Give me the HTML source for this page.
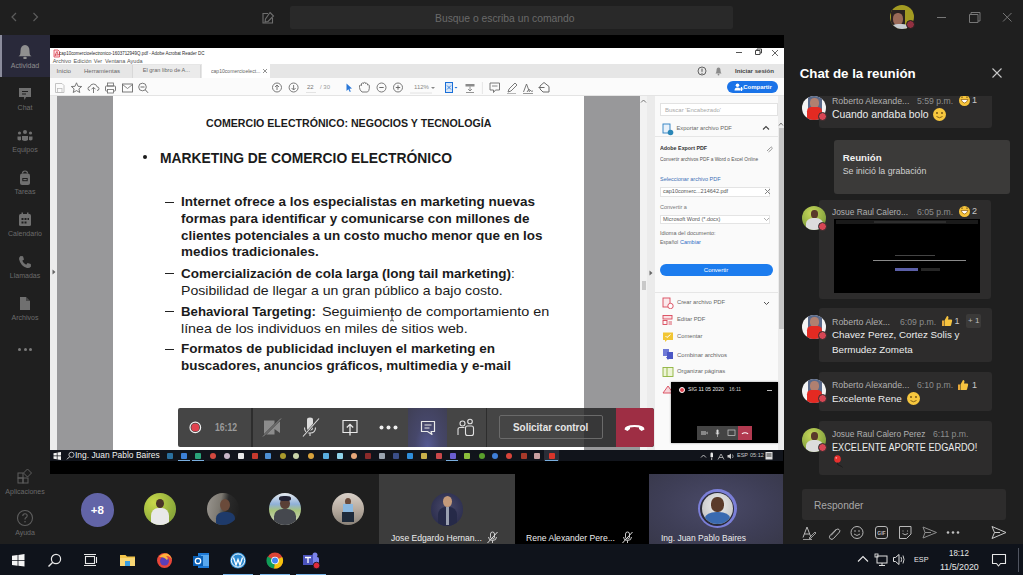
<!DOCTYPE html>
<html><head><meta charset="utf-8">
<style>
*{margin:0;padding:0;box-sizing:border-box}
html,body{width:1023px;height:575px;overflow:hidden;background:#1f1f1f;font-family:"Liberation Sans",sans-serif}
.a{position:absolute}
.t{position:absolute;white-space:nowrap;line-height:1}
#top{left:0;top:0;width:1023px;height:35px;background:#1f1f1f}
#rail{left:0;top:35px;width:50px;height:509px;background:#1f1f1f}
#stage{left:50px;top:35px;width:734px;height:439px;background:#000}
#chat{left:784px;top:35px;width:239px;height:509px;background:#1f1f1f}
#strip{left:50px;top:474px;width:734px;height:70px;background:#1f1f1f}
#tb{left:0;top:544px;width:1023px;height:31px;background:#0f131b}
.rl{position:absolute;left:0;width:50px;text-align:center;font-size:7px;color:#6c6c6c;line-height:1}
</style></head><body>
<div id="top" class="a">
  <svg class="a" style="left:0;top:0" width="60" height="35"><path d="M16 13 L12 17 L16 21" stroke="#5c5c5c" stroke-width="1.2" fill="none"/><path d="M33.5 13 L37.5 17 L33.5 21" stroke="#5c5c5c" stroke-width="1.2" fill="none"/></svg>
  <svg class="a" style="left:261px;top:11px" width="14" height="14"><path d="M9 1.5 L12.5 5 L7 10.5 L4 11 L4.5 8 Z" stroke="#6e6e6e" stroke-width="1.1" fill="none"/><path d="M7 2.5 H2 V12 H11.5 V7" stroke="#6e6e6e" stroke-width="1.1" fill="none"/></svg>
  <div class="a" style="left:290px;top:6px;width:443px;height:23px;background:#292929;border-radius:2px"></div>
  <div class="t" style="left:434.7px;top:12.6px;font-size:10.5px;color:#6a6a6a;transform:scaleX(0.984);transform-origin:0 0">Busque o escriba un comando</div>
  <div class="a" style="left:890px;top:5px;width:24px;height:24px;border-radius:50%;background:#a39b22;overflow:hidden"><div class="a" style="left:1px;top:5px;width:14px;height:19px;background:#2a2220"></div><div class="a" style="left:3px;top:8px;width:10px;height:12px;border-radius:45%;background:#9a6a58"></div><div class="a" style="left:1px;top:19px;width:18px;height:8px;border-radius:40% 40% 0 0;background:#c8ccd0"></div></div>
  <div class="a" style="left:906px;top:19.5px;width:9px;height:9px;border-radius:50%;background:#923040;border:1px solid #1f1f1f"></div>
  <div class="a" style="left:936.5px;top:16.5px;width:9.5px;height:1px;background:#777"></div>
  <svg class="a" style="left:968px;top:11px" width="14" height="13"><path d="M1.5 3.5 H10 V11.5 H1.5 Z" stroke="#777" fill="none"/><path d="M3 3.5 V1.5 H12 V10 H10" stroke="#777" fill="none"/></svg>
  <svg class="a" style="left:1002px;top:12px" width="11" height="11"><path d="M1 1 L9.5 9.5 M9.5 1 L1 9.5" stroke="#777" stroke-width="1"/></svg>
</div>
<div id="rail" class="a">
  <div class="a" style="left:0;top:0;width:50px;height:42px;background:#29293a"></div>
  <div class="a" style="left:0;top:0;width:2px;height:42px;background:#8b8c9c"></div>
  <svg class="a" style="left:17px;top:8px" width="16" height="16"><path d="M3 12 Q3.5 10.5 3.5 8 Q3.5 2.5 8 2 Q12.5 2.5 12.5 8 Q12.5 10.5 13 12 L14.5 13.2 H1.5 Z" fill="#8f8f8f"/><ellipse cx="8" cy="15" rx="1.8" ry="1.2" fill="#8f8f8f"/></svg>
  <div class="rl" style="top:27px;color:#8f8f8f">Actividad</div>
  <svg class="a" style="left:17px;top:51px" width="16" height="16"><path d="M2 2 H14 V11 H9 L7.5 14 L7 11 H2 Z" fill="#707070"/><path d="M5 5.5 H11 M5 8 H9" stroke="#1f1f1f" stroke-width="1"/></svg>
  <div class="rl" style="top:69px">Chat</div>
  <svg class="a" style="left:16px;top:94px" width="18" height="14"><circle cx="9" cy="3" r="2" fill="#707070"/><circle cx="3.5" cy="4" r="1.6" fill="#707070"/><circle cx="14.5" cy="4" r="1.6" fill="#707070"/><path d="M6 7 H12 V11 Q9 13 6 11 Z" fill="#707070"/><path d="M1.5 7.5 H5 V11 Q3 12 1.5 10.5 Z" fill="#707070"/><path d="M13 7.5 H16.5 V10.5 Q15 12 13 11 Z" fill="#707070"/></svg>
  <div class="rl" style="top:111px">Equipos</div>
  <svg class="a" style="left:18px;top:135px" width="14" height="16"><path d="M4.5 3.5 Q4.5 1 7 1 Q9.5 1 9.5 3.5" stroke="#707070" stroke-width="1.2" fill="none"/><rect x="2" y="3.5" width="10" height="11.5" rx="2" fill="#707070"/><rect x="4.3" y="8" width="5.4" height="3.2" fill="#1f1f1f"/><rect x="5.3" y="9" width="3.4" height="1.2" fill="#707070"/></svg>
  <div class="rl" style="top:153px">Tareas</div>
  <svg class="a" style="left:18px;top:177px" width="14" height="15"><rect x="1" y="2" width="12" height="12" rx="1.5" fill="#707070"/><rect x="3.5" y="0.5" width="1.5" height="3" fill="#707070"/><rect x="9" y="0.5" width="1.5" height="3" fill="#707070"/><rect x="3.5" y="6" width="2" height="2" fill="#1f1f1f"/><rect x="6.5" y="6" width="2" height="2" fill="#1f1f1f"/><rect x="9.5" y="6" width="1.5" height="2" fill="#1f1f1f"/><rect x="3.5" y="9.5" width="2" height="2" fill="#1f1f1f"/><rect x="6.5" y="9.5" width="2" height="2" fill="#1f1f1f"/></svg>
  <div class="rl" style="top:195px">Calendario</div>
  <svg class="a" style="left:18px;top:220px" width="14" height="14"><path d="M2.5 1 L5 1.2 L6 4.5 L4.3 5.8 Q5.5 8.7 8.2 9.8 L9.5 8 L12.8 9 L13 11.5 Q11.5 13.5 9 13 Q2.5 11 1 4 Q1 2 2.5 1 Z" fill="#707070"/></svg>
  <div class="rl" style="top:237px">Llamadas</div>
  <svg class="a" style="left:19px;top:261px" width="12" height="15"><path d="M1 1 H7 L11 5 V14 H1 Z" fill="#707070"/><path d="M7 1 V5 H11" fill="#1f1f1f" opacity="0.5"/></svg>
  <div class="rl" style="top:279px">Archivos</div>
  <div class="a" style="left:18px;top:313px;width:3px;height:3px;border-radius:50%;background:#7a7a7a"></div>
  <div class="a" style="left:23.5px;top:313px;width:3px;height:3px;border-radius:50%;background:#7a7a7a"></div>
  <div class="a" style="left:29px;top:313px;width:3px;height:3px;border-radius:50%;background:#7a7a7a"></div>
  <svg class="a" style="left:17px;top:433px" width="16" height="16"><rect x="1" y="5" width="5" height="5" stroke="#5e5e5e" fill="none"/><rect x="1" y="10" width="5" height="5" stroke="#5e5e5e" fill="none"/><rect x="6" y="10" width="5" height="5" stroke="#5e5e5e" fill="none"/><path d="M10.5 1 L14.5 5 L10.5 9 L6.5 5 Z" stroke="#5e5e5e" fill="none"/></svg>
  <div class="rl" style="top:453px;color:#6a6a6a">Aplicaciones</div>
  <svg class="a" style="left:16px;top:474px" width="18" height="18"><circle cx="9" cy="9" r="7.5" stroke="#5e5e5e" stroke-width="1.1" fill="none"/><path d="M6.8 7 Q6.8 4.8 9 4.8 Q11.2 4.8 11.2 6.8 Q11.2 8 9.5 9 Q9 9.4 9 10.6" stroke="#5e5e5e" stroke-width="1.1" fill="none"/><circle cx="9" cy="12.8" r="0.8" fill="#5e5e5e"/></svg>
  <div class="rl" style="top:494px;color:#6a6a6a">Ayuda</div>
</div>
<div id="stage" class="a"></div>
<!-- ACROBAT -->
<div class="a" style="left:50px;top:48px;width:734px;height:402px;background:#fff;overflow:hidden">
  <svg class="a" style="left:3px;top:1px" width="7" height="9"><path d="M1 1 H5 L6.5 2.5 V8 H1 Z" fill="#fde8ea" stroke="#e04050" stroke-width="0.8"/><path d="M2 6.5 Q3.5 3 4 2.5 Q4.5 5 5.5 6 Q3.5 5.5 2 6.5 Z" fill="none" stroke="#d02030" stroke-width="0.7"/></svg>
  <div class="t" style="left:9px;top:2.5px;font-size:5.5px;color:#2a2a2a;transform:scaleX(0.81);transform-origin:0 0">cap10comercioelectronico-1603712949Q.pdf - Adobe Acrobat Reader DC</div>
  <div class="t" style="left:2.7px;top:10.5px;font-size:5.5px;color:#555">Archivo</div><div class="t" style="left:23.5px;top:10.5px;font-size:5.5px;color:#555">Edición</div><div class="t" style="left:43.8px;top:10.5px;font-size:5.5px;color:#555">Ver</div><div class="t" style="left:55px;top:10.5px;font-size:5.5px;color:#555">Ventana</div><div class="t" style="left:77px;top:10.5px;font-size:5.5px;color:#555">Ayuda</div>
  <div class="a" style="left:686px;top:4px;width:6px;height:1px;background:#555"></div>
  <svg class="a" style="left:703px;top:0px" width="10" height="8"><path d="M2.5 2.5 H7 V6.5 H2.5 Z M4 2.5 V1 H8.5 V5 H7" stroke="#444" fill="none" stroke-width="1"/></svg>
  <svg class="a" style="left:721px;top:1px" width="8" height="8"><path d="M1 1 L7 7 M7 1 L1 7" stroke="#555" stroke-width="0.9"/></svg>
  <!-- tab row -->
  <div class="a" style="left:0;top:16px;width:734px;height:14px;background:#e6e6e6"></div>
  <div class="t" style="left:6.6px;top:20px;font-size:6.2px;color:#666">Inicio</div>
  <div class="t" style="left:34px;top:20px;font-size:6px;color:#666">Herramientas</div>
  <div class="a" style="left:82px;top:17px;width:69px;height:13px;background:#ebebeb;border-left:1px solid #d8d8d8;border-right:1px solid #d8d8d8"></div>
  <div class="t" style="left:92.7px;top:20.3px;font-size:5.6px;color:#666">El gran libro de A...</div>
  <div class="a" style="left:152px;top:16px;width:68px;height:14px;background:#fff"></div>
  <div class="t" style="left:160.6px;top:20.3px;font-size:6px;color:#666;transform:scaleX(0.846);transform-origin:0 0">cap10comercioelect...</div>
  <svg class="a" style="left:212px;top:20px" width="6" height="6"><path d="M1 1 L5 5 M5 1 L1 5" stroke="#777" stroke-width="0.8"/></svg>
  <svg class="a" style="left:647px;top:18px" width="10" height="10"><circle cx="5" cy="5" r="4" stroke="#555" fill="none" stroke-width="0.9"/><path d="M5 2.6 V5.8" stroke="#555"/><circle cx="5" cy="7.3" r="0.6" fill="#555"/></svg>
  <svg class="a" style="left:664px;top:18px" width="9" height="10"><path d="M1.5 7.5 Q2.5 6.5 2.5 4.5 Q2.5 1.5 4.5 1.5 Q6.5 1.5 6.5 4.5 Q6.5 6.5 7.5 7.5 Z" fill="#8a8a8a"/><circle cx="4.5" cy="8.6" r="0.9" fill="#8a8a8a"/></svg>
  <div class="t" style="left:685px;top:20px;font-size:6.1px;color:#444;font-weight:bold">Iniciar sesión</div>
  <!-- toolbar -->
  <div class="a" style="left:0;top:30px;width:734px;height:18px;background:#fbfbfb;border-bottom:1px solid #e4e4e4"></div>
  <div class="a" style="left:677px;top:33px;width:51px;height:12px;border-radius:6px;background:#1a73e8"></div>
  <svg class="a" style="left:684px;top:35px" width="10" height="8"><circle cx="3.5" cy="2.2" r="1.8" fill="#fff"/><path d="M0.5 7.5 Q0.5 4.5 3.5 4.5 Q6.5 4.5 6.5 7.5 Z" fill="#fff"/><path d="M7.5 4 V8 M5.5 6 H9.5" stroke="#fff" stroke-width="1.2"/></svg>
  <div class="t" style="left:693.2px;top:36.3px;font-size:6px;color:#fff;font-weight:bold">Compartir</div>

  <!-- toolbar icons -->
  <svg class="a" style="left:4px;top:34px" width="100" height="12">
    <path d="M1.5 1.5 H8 L10 3.5 V10.5 H1.5 Z" stroke="#bdbdbd" fill="none" stroke-width="0.9"/><rect x="3.5" y="6.5" width="4.5" height="4" stroke="#bdbdbd" fill="none" stroke-width="0.8"/>
    <path d="M22.5 0.8 L24 4.3 L27.7 4.5 L24.9 6.9 L25.8 10.5 L22.5 8.6 L19.2 10.5 L20.1 6.9 L17.3 4.5 L21 4.3 Z" stroke="#6b6b6b" fill="none" stroke-width="0.9"/>
    <path d="M36 8.5 Q34 8.5 34 6.5 Q34 4.6 36 4.6 Q36.6 2 39.5 2 Q42.4 2 43 4.8 Q45 4.9 45 6.7 Q45 8.5 43 8.5" stroke="#6b6b6b" fill="none" stroke-width="0.9"/><path d="M39.5 11 V5.5 M37.5 7.3 L39.5 5.3 L41.5 7.3" stroke="#6b6b6b" fill="none" stroke-width="0.9"/>
    <rect x="51.5" y="4" width="10" height="5" rx="0.8" fill="none" stroke="#6b6b6b" stroke-width="0.9"/><rect x="53.5" y="1" width="6" height="3" stroke="#6b6b6b" fill="none" stroke-width="0.8"/><rect x="53.5" y="7.5" width="6" height="3.5" fill="#fff" stroke="#6b6b6b" stroke-width="0.8"/>
    <rect x="68.5" y="2" width="10" height="8" stroke="#6b6b6b" fill="none" stroke-width="0.9"/><path d="M68.5 2.5 L73.5 6.5 L78.5 2.5" stroke="#6b6b6b" fill="none" stroke-width="0.8"/>
    <circle cx="88.5" cy="5" r="3.8" stroke="#6b6b6b" fill="none" stroke-width="0.9"/><path d="M91.3 7.8 L94 10.8 M86.5 5 H90.5" stroke="#6b6b6b" stroke-width="1"/>
  </svg>
  <svg class="a" style="left:220px;top:33px" width="300" height="14">
    <circle cx="7" cy="6.5" r="4.5" stroke="#6b6b6b" fill="none" stroke-width="0.9"/><path d="M7 9 V4.2 M5 6 L7 4 L9 6" stroke="#6b6b6b" fill="none" stroke-width="0.9"/>
    <circle cx="23.6" cy="6.5" r="4.5" stroke="#6b6b6b" fill="none" stroke-width="0.9"/><path d="M23.6 4 V8.8 M21.6 7 L23.6 9 L25.6 7" stroke="#6b6b6b" fill="none" stroke-width="0.9"/>
    <path d="M36 11.5 H46" stroke="#ddd" stroke-width="0.8"/>
    <path d="M76.5 2.5 L76.5 10 L78.4 8.2 L79.8 11 L80.8 10.5 L79.5 7.7 L82 7.5 Z" fill="#2a78d8"/>
    <path d="M92 11 Q89.5 9 89.5 6.5 L89.5 4.5 Q90.5 3.8 91.5 4.5 V2.5 Q92.5 1.5 93.5 2.5 V1.8 Q94.5 1 95.5 1.8 V2.5 Q96.5 1.8 97.5 2.8 V4 Q98.5 3.5 99.3 4.3 V7.5 Q99 10 97.5 11 Z" stroke="#6b6b6b" fill="none" stroke-width="0.9"/>
    <circle cx="111.5" cy="6.5" r="4.5" stroke="#6b6b6b" fill="none" stroke-width="0.9"/><path d="M109.3 6.5 H113.7" stroke="#6b6b6b" stroke-width="1"/>
    <circle cx="128" cy="6.5" r="4.5" stroke="#6b6b6b" fill="none" stroke-width="0.9"/><path d="M125.8 6.5 H130.2 M128 4.3 V8.7" stroke="#6b6b6b" stroke-width="1"/>
    <path d="M140 12 H162" stroke="#ddd" stroke-width="0.8"/><path d="M161 6 L163 8 L165 6" fill="#888"/>
    <rect x="175.5" y="1.5" width="7" height="10" stroke="#1a6fd8" fill="#d7e6f8" stroke-width="1"/><path d="M177 8.5 L181 4.5 M177 4.5 L181 8.5" stroke="#1a6fd8" stroke-width="0.8"/><path d="M184.5 6 L186 7.5 L187.5 6 Z" fill="#1a6fd8"/>
    <rect x="195.5" y="3" width="9" height="2.5" fill="#8a8a8a"/><path d="M200 5.5 V10 M198 8 L200 10 L202 8 M196 11.5 H204" stroke="#7a7a7a" fill="none" stroke-width="0.8"/>
    <path d="M212.4 1 V13" stroke="#e0e0e0" stroke-width="0.8"/>
    <path d="M220 2 H229.5 V9 H225.5 L223.5 11.5 V9 H220 Z" stroke="#6b6b6b" fill="none" stroke-width="0.9"/><path d="M222 5 H227.5" stroke="#6b6b6b" stroke-width="0.8"/>
    <path d="M238 11 L239 8 L245 2 L247 4 L241 10 Z" stroke="#6b6b6b" fill="none" stroke-width="0.9"/><path d="M237 12.5 H246" stroke="#999" stroke-width="0.7"/>
    <path d="M253.5 11 L256.5 3 L259.5 11 M257 11 Q259 7 260 9 Q261 11 263 10" stroke="#6b6b6b" fill="none" stroke-width="0.9"/><path d="M253 12.5 H263" stroke="#6b6b6b" stroke-width="0.7"/>
    <path d="M270 5 L274 1.5 L279 5.5 V11 H273 L270 8 Z" stroke="#6b6b6b" fill="none" stroke-width="1"/><path d="M268.5 6.5 H274.5" stroke="#6b6b6b" stroke-width="1"/>
  </svg>
  <div class="t" style="left:257px;top:36px;font-size:6px;color:#777">22</div>
  <div class="t" style="left:270px;top:36px;font-size:6px;color:#999">/ 30</div>
  <div class="t" style="left:364px;top:36px;font-size:6px;color:#888">112%</div>
  <!-- content -->
  <div class="a" style="left:0;top:48px;width:7px;height:354px;background:#ececec"></div>
  <div class="a" style="left:7px;top:48px;width:56px;height:354px;background:#98989a"></div>
  <div class="a" style="left:63px;top:48px;width:471px;height:354px;background:#fff"></div>
<div class="t" style="left:156.0px;top:70.2px;font-size:11px;font-weight:bold;color:#1b1b1b;transform:scaleX(0.964);transform-origin:0 0">COMERCIO ELECTRÓNICO: NEGOCIOS Y TECNOLOGÍA</div>
<div class="t" style="left:110.3px;top:102.6px;font-size:14.7px;font-weight:bold;color:#1b1b1b;transform:scaleX(0.944);transform-origin:0 0">MARKETING DE COMERCIO ELECTRÓNICO</div>
<div class="t" style="left:131.0px;top:147.1px;font-size:13px;font-weight:bold;color:#1b1b1b;transform:scaleX(1.038);transform-origin:0 0">Internet ofrece a los especialistas en marketing nuevas</div>
<div class="t" style="left:131.0px;top:163.7px;font-size:13px;font-weight:bold;color:#1b1b1b;transform:scaleX(1.035);transform-origin:0 0">formas para identificar y comunicarse con millones de</div>
<div class="t" style="left:131.0px;top:180.7px;font-size:13px;font-weight:bold;color:#1b1b1b;transform:scaleX(1.034);transform-origin:0 0">clientes potenciales a un costo mucho menor que en los</div>
<div class="t" style="left:131.0px;top:197.4px;font-size:13px;font-weight:bold;color:#1b1b1b;transform:scaleX(1.036);transform-origin:0 0">medios tradicionales.</div>
<div class="t" style="left:131.0px;top:218.9px;font-size:13px;font-weight:normal;color:#1b1b1b;transform:scaleX(1.038);transform-origin:0 0"><b>Comercialización de cola larga (long tail marketing)</b>:</div>
<div class="t" style="left:131.0px;top:236.3px;font-size:13px;font-weight:normal;color:#1b1b1b;transform:scaleX(1.083);transform-origin:0 0">Posibilidad de llegar a un gran público a bajo costo.</div>
<div class="t" style="left:131.0px;top:256.5px;font-size:13px;font-weight:bold;color:#1b1b1b;transform:scaleX(1.017);transform-origin:0 0">Behavioral Targeting:</div><div class="t" style="left:271.8px;top:256.5px;font-size:13px;font-weight:normal;color:#1b1b1b;transform:scaleX(1.107);transform-origin:0 0">Seguimiento de comportamiento en</div>
<div class="t" style="left:131.0px;top:273.6px;font-size:13px;font-weight:normal;color:#1b1b1b;transform:scaleX(1.093);transform-origin:0 0">línea de los individuos en miles de sitios web.</div>
<div class="t" style="left:131.0px;top:294.0px;font-size:13px;font-weight:bold;color:#1b1b1b;transform:scaleX(1.040);transform-origin:0 0">Formatos de publicidad incluyen el marketing en</div>
<div class="t" style="left:131.0px;top:310.7px;font-size:13px;font-weight:bold;color:#1b1b1b;transform:scaleX(1.033);transform-origin:0 0">buscadores, anuncios gráficos, multimedia y e-mail</div>
<div class="a" style="left:93px;top:107px;width:4px;height:4px;border-radius:50%;background:#1b1b1b"></div>
<div class="a" style="left:115px;top:154px;width:9px;height:1.2px;background:#222"></div>
<div class="a" style="left:115px;top:225px;width:9px;height:1.2px;background:#222"></div>
<div class="a" style="left:115px;top:263px;width:9px;height:1.2px;background:#222"></div>
<div class="a" style="left:115px;top:301px;width:9px;height:1.2px;background:#222"></div>
  <div class="a" style="left:534px;top:48px;width:56px;height:354px;background:#98989a"></div>
  <div class="a" style="left:590px;top:48px;width:7px;height:354px;background:#f2f2f2"></div>
  <div class="a" style="left:592px;top:233px;width:4px;height:9px;background:#c9c9c9"></div>
  <div class="a" style="left:597px;top:48px;width:8px;height:354px;background:#ebebeb"></div>
  <div class="a" style="left:605px;top:48px;width:123px;height:354px;background:#fafafa"></div>
  <div class="a" style="left:728px;top:48px;width:6px;height:354px;background:#ececec"></div>
  <div class="a" style="left:729px;top:80px;width:5px;height:201px;background:#c6c6c6"></div>
  <svg class="a" style="left:1px;top:220px" width="6" height="8"><path d="M1.5 1.5 L4.5 4 L1.5 6.5 Z" fill="#666"/></svg>
  <svg class="a" style="left:339px;top:262px" width="6" height="12"><path d="M1 1 Q3 1 3 2.5 Q3 1 5 1 M3 2.5 V9.5 M1 11 Q3 11 3 9.5 Q3 11 5 11" stroke="#222" stroke-width="0.8" fill="none"/></svg>
  <!-- right pane -->
  <div class="a" style="left:610px;top:55px;width:118px;height:13px;background:#fff;border:1px solid #e2e2e2"></div>
  <div class="t" style="left:615px;top:58.5px;font-size:6px;color:#aaa">Buscar 'Encabezado'</div>
  <svg class="a" style="left:612px;top:75px" width="12" height="13"><rect x="1" y="1" width="7" height="9" stroke="#2b7ec1" fill="#e8f1fa" stroke-width="0.9"/><circle cx="8.5" cy="9.5" r="2.8" fill="#2b87b8"/></svg>
  <div class="t" style="left:626.5px;top:78px;font-size:5.8px;color:#666">Exportar archivo PDF</div>
  <svg class="a" style="left:712px;top:77px" width="8" height="6"><path d="M1 4.5 L4 1.5 L7 4.5" stroke="#444" stroke-width="1.1" fill="none"/></svg>
  <div class="a" style="left:605px;top:88px;width:123px;height:1px;background:#e6e6e6"></div>
  <div class="t" style="left:610px;top:97.5px;font-size:5.8px;color:#333;font-weight:bold;transform:scaleX(0.92);transform-origin:0 0">Adobe Export PDF</div>
  <svg class="a" style="left:715px;top:97px" width="8" height="8"><path d="M2 6 L5.5 2.5 Q6.5 1.5 7 2.5 Q7.5 3.5 6.5 4.5 L3.5 7" stroke="#999" stroke-width="1" fill="none"/></svg>
  <div class="t" style="left:610px;top:109px;font-size:5.2px;color:#555;transform:scaleX(0.92);transform-origin:0 0">Convertir archivos PDF a Word o Excel Online</div>
  <div class="t" style="left:610px;top:128.5px;font-size:5.5px;color:#3c6fb5">Seleccionar archivo PDF</div>
  <div class="a" style="left:610px;top:139px;width:110px;height:9.5px;background:#fff;border:1px solid #e4e4e4"></div>
  <div class="t" style="left:613px;top:141px;font-size:5.5px;color:#555">cap10comerc...214642.pdf</div>
  <svg class="a" style="left:714px;top:140px" width="7" height="7"><path d="M1 1 L6 6 M6 1 L1 6" stroke="#777" stroke-width="0.9"/></svg>
  <div class="t" style="left:610px;top:156.5px;font-size:5.5px;color:#777">Convertir a</div>
  <div class="a" style="left:610px;top:166.5px;width:110px;height:9.5px;background:#fff;border:1px solid #e4e4e4"></div>
  <div class="t" style="left:613px;top:168.5px;font-size:5.5px;color:#555">Microsoft Word (*.docx)</div>
  <svg class="a" style="left:713px;top:169px" width="7" height="5"><path d="M1 1 L3.5 3.5 L6 1" stroke="#999" stroke-width="0.8" fill="none"/></svg>
  <div class="t" style="left:610px;top:182.5px;font-size:5.5px;color:#666">Idioma del documento:</div>
  <div class="t" style="left:610px;top:192px;font-size:5px;color:#666">Español</div>
  <div class="t" style="left:630px;top:192px;font-size:5.5px;color:#2f6cc4">Cambiar</div>
  <div class="a" style="left:609.5px;top:216px;width:113px;height:12px;border-radius:6px;background:#1c7cee"></div>
  <div class="t" style="left:609.5px;width:113px;text-align:center;top:219px;font-size:6px;color:#fff">Convertir</div>
  <div class="a" style="left:605px;top:243.5px;width:123px;height:1px;background:#e6e6e6"></div>
  <svg class="a" style="left:612px;top:249px" width="12" height="12"><rect x="1" y="1" width="7" height="9" stroke="#d9475a" fill="#fbe9ec" stroke-width="0.9"/><circle cx="8.5" cy="9" r="2.7" fill="#fff" stroke="#d9475a" stroke-width="0.9"/></svg>
  <div class="t" style="left:627px;top:252px;font-size:5.8px;color:#666">Crear archivo PDF</div>
  <svg class="a" style="left:713px;top:252.5px" width="7" height="5"><path d="M1 1 L3.5 3.5 L6 1" stroke="#555" stroke-width="1" fill="none"/></svg>
  <svg class="a" style="left:612px;top:266px" width="12" height="12"><rect x="1" y="1.5" width="9" height="3.5" fill="#fbe0e4" stroke="#d9475a" stroke-width="0.9"/><rect x="1" y="6.5" width="4" height="4" stroke="#d9475a" fill="none" stroke-width="0.9"/><path d="M6.5 8 H10 M6.5 10 H10" stroke="#d9475a" stroke-width="0.9"/></svg>
  <div class="t" style="left:627px;top:268.5px;font-size:5.8px;color:#666">Editar PDF</div>
  <svg class="a" style="left:612px;top:283px" width="12" height="12"><path d="M1 1.5 H11 V9 H5 L3 11 V9 H1 Z" fill="#f2c634"/><path d="M3.5 5 L5 6.5 L8.5 3.5" stroke="#fff" stroke-width="1" fill="none"/></svg>
  <div class="t" style="left:627px;top:286px;font-size:5.8px;color:#666">Comentar</div>
  <svg class="a" style="left:612px;top:300px" width="12" height="13"><rect x="1" y="1" width="6" height="7" fill="#6f7ad6"/><rect x="5" y="4" width="6" height="7" fill="#4b57c5"/><path d="M4 9 L6 12 L8 9" fill="#4b57c5"/></svg>
  <div class="t" style="left:627px;top:303.5px;font-size:6px;color:#666">Combinar archivos</div>
  <svg class="a" style="left:612px;top:318px" width="12" height="12"><rect x="1" y="1.5" width="10" height="9" fill="#edf5d6" stroke="#8fb33d" stroke-width="0.9"/><path d="M5 1.5 V10.5" stroke="#8fb33d" stroke-width="0.9"/></svg>
  <div class="t" style="left:627px;top:321px;font-size:5.9px;color:#666">Organizar páginas</div>
  <svg class="a" style="left:612px;top:336px" width="12" height="10"><path d="M1 9 L6 2 L11 9 Z" fill="#f6d5da" stroke="#d9475a" stroke-width="0.9"/></svg>
  <svg class="a" style="left:598px;top:221px" width="6" height="8"><path d="M1.5 1.5 L4.5 4 L1.5 6.5 Z" fill="#666"/></svg>
  <svg class="a" style="left:590px;top:50px" width="7" height="6"><path d="M1 4.5 L3.5 2 L6 4.5" stroke="#666" stroke-width="0.9" fill="none"/></svg>
  <svg class="a" style="left:728px;top:73px" width="6" height="6"><path d="M1 4.5 L3 2 L5 4.5" stroke="#666" stroke-width="0.9" fill="none"/></svg>

</div>

<!-- TEAMS OVERLAY TOOLBAR -->
<div class="a" style="left:178px;top:408px;width:476px;height:39px;background:rgba(40,40,40,0.865);border-radius:2px;overflow:hidden">
  <div class="a" style="left:73px;top:0;width:2px;height:39px;background:#2d2d2d"></div>
  <div class="a" style="left:230px;top:0;width:39px;height:39px;background:radial-gradient(ellipse at 50% 100%,#565a94 0%,#46476a 45%,#3f3f55 100%)"></div>
  <div class="a" style="left:307.5px;top:0;width:1.5px;height:39px;background:#2d2d2d"></div>
  <div class="a" style="left:321px;top:7px;width:104px;height:24px;border:1px solid #6a6a6a;border-radius:2px"></div>
  <div class="t" style="left:335.2px;top:14.8px;font-size:10.3px;font-weight:bold;color:#e6e6e6;transform:scaleX(0.96);transform-origin:0 0">Solicitar control</div>
  <div class="a" style="left:437.5px;top:0;width:38.5px;height:39px;background:#9e2e44;border-radius:0 3px 3px 0"></div>
</div>
<svg class="a" style="left:178px;top:408px" width="476" height="39">
  <circle cx="17.3" cy="19.4" r="5.3" fill="none" stroke="#f2f2f2" stroke-width="1.2"/><circle cx="17.3" cy="19.4" r="3.9" fill="#e0434f"/>
  <path d="M86 12.5 H96.5 V17 L102 13 V25 L96.5 21 V26.5 H86 Z" fill="#8c8c8c"/><path d="M85.5 28 L102.5 11" stroke="#454545" stroke-width="2.2"/><path d="M85 28.5 L103 10.5" stroke="#8c8c8c" stroke-width="1"/>
  <path d="M129 11.5 Q129 9.5 132 9.5 Q135 9.5 135 11.5 V20 Q135 22.5 132 22.5 Q129 22.5 129 20 Z" fill="#dcdcdc"/><path d="M126.5 19.5 Q126.5 25 132 25 Q137.5 25 137.5 19.5 M132 25 V28" stroke="#dcdcdc" stroke-width="1.1" fill="none"/><path d="M125.5 28.5 L141 10.5" stroke="#454545" stroke-width="2.4"/><path d="M125 28.5 L141 10.5" stroke="#dcdcdc" stroke-width="1.1"/>
  <path d="M165 12.5 H179 V24.5 H165 Z" fill="none" stroke="#e8e8e8" stroke-width="1.2"/><path d="M172 27.5 V16.5 M168.8 19.5 L172 16.3 L175.2 19.5" stroke="#e8e8e8" stroke-width="1.3" fill="none"/><path d="M172 24.5 V27.5" stroke="#454545" stroke-width="0"/>
  <circle cx="203.5" cy="19.5" r="2" fill="#f0f0f0"/><circle cx="210.5" cy="19.5" r="2" fill="#f0f0f0"/><circle cx="217.5" cy="19.5" r="2" fill="#f0f0f0"/>
  <path d="M243.5 13.5 H256.5 V23.5 H253 L254 26.5 L249.5 23.5 H243.5 Z" fill="none" stroke="#e8e8e8" stroke-width="1.2" stroke-linejoin="round"/><path d="M246.5 17 H253.5 M246.5 20 H251.5" stroke="#e8e8e8" stroke-width="1.1"/>
  <circle cx="284.5" cy="15.5" r="2.5" fill="none" stroke="#e0e0e0" stroke-width="1.1"/><circle cx="292" cy="13.5" r="2.3" fill="none" stroke="#e0e0e0" stroke-width="1.1"/><path d="M280 27 V21.5 Q280 19.5 282 19.5 H286.5" stroke="#e0e0e0" stroke-width="1.1" fill="none"/><rect x="287.5" y="18" width="8" height="9.5" rx="2" fill="none" stroke="#e0e0e0" stroke-width="1.1"/>
  <path d="M446.5 21.5 Q446.5 17 456.5 17 Q466.5 17 466.5 21.5 L463.5 23 L461 21 V19.5 Q456.5 18.5 452 19.5 V21 L449.5 23 Z" fill="#ffffff"/>
</svg>
<div class="t" style="left:215px;top:422.8px;font-size:10px;font-weight:bold;color:#9b9b9b;transform:scaleX(0.86);transform-origin:0 0">16:12</div>
<!-- SHARED TASKBAR -->
<div class="a" style="left:50px;top:450px;width:733px;height:11px;background:#11141b"></div>
<div class="a" style="left:544px;top:450px;width:15px;height:11px;background:#2a2e38"></div>
<svg class="a" style="left:53px;top:452px" width="9" height="8"><path d="M0.5 1.2 L3.8 0.7 V3.6 H0.5 Z M4.5 0.6 L8 0.1 V3.6 H4.5 Z M0.5 4.3 H3.8 V7.2 L0.5 6.8 Z M4.5 4.3 H8 V7.9 L4.5 7.4 Z" fill="#f0f0f0"/></svg>
<svg class="a" style="left:66px;top:451px" width="10" height="9"><circle cx="5.5" cy="3.8" r="2.6" stroke="#c8c8c8" fill="none" stroke-width="0.9"/><path d="M3.6 5.7 L1 8.3" stroke="#c8c8c8" stroke-width="1"/></svg>
<div class="a" style="left:167.0px;top:452.5px;width:6px;height:6px;background:#2a6f9e;border-radius:1px"></div>
<div class="a" style="left:181.0px;top:452.5px;width:6px;height:6px;background:#3c7fd6;border-radius:1px"></div>
<div class="a" style="left:195.0px;top:452.5px;width:6px;height:6px;background:#2aa37a;border-radius:1px"></div>
<div class="a" style="left:210.0px;top:452.5px;width:6px;height:6px;background:#d4493f;border-radius:50%"></div>
<div class="a" style="left:224.0px;top:452.5px;width:6px;height:6px;background:#c9b7c8;border-radius:50%"></div>
<div class="a" style="left:238.0px;top:452.5px;width:6px;height:6px;background:#e8e8e8;border-radius:1px"></div>
<div class="a" style="left:252.0px;top:452.5px;width:6px;height:6px;background:#c73a2e;border-radius:1px"></div>
<div class="a" style="left:265.0px;top:452.5px;width:6px;height:6px;background:#4d8fd4;border-radius:1px"></div>
<div class="a" style="left:280.0px;top:452.5px;width:6px;height:6px;background:#a99a2c;border-radius:50%"></div>
<div class="a" style="left:293.0px;top:452.5px;width:6px;height:6px;background:#c8d4a8;border-radius:50%"></div>
<div class="a" style="left:307.6px;top:452.5px;width:6px;height:6px;background:#d9a33c;border-radius:50%"></div>
<div class="a" style="left:322.8px;top:452.5px;width:6px;height:6px;background:#5aaee0;border-radius:1px"></div>
<div class="a" style="left:336.8px;top:452.5px;width:6px;height:6px;background:#8fd3ea;border-radius:1px"></div>
<div class="a" style="left:350.5px;top:452.5px;width:6px;height:6px;background:#e6a77a;border-radius:50%"></div>
<div class="a" style="left:365.0px;top:452.5px;width:6px;height:6px;background:#8a2a2a;border-radius:1px"></div>
<div class="a" style="left:379.0px;top:452.5px;width:6px;height:6px;background:#9aa4b0;border-radius:1px"></div>
<div class="a" style="left:392.8px;top:452.5px;width:6px;height:6px;background:#3b4f8a;border-radius:1px"></div>
<div class="a" style="left:407.3px;top:452.5px;width:6px;height:6px;background:#2f8fdc;border-radius:1px"></div>
<div class="a" style="left:421.3px;top:452.5px;width:6px;height:6px;background:#c8b04a;border-radius:1px"></div>
<div class="a" style="left:435.8px;top:452.5px;width:6px;height:6px;background:#c9484a;border-radius:1px"></div>
<div class="a" style="left:449.5px;top:452.5px;width:6px;height:6px;background:#6b5fd0;border-radius:1px"></div>
<div class="a" style="left:464.0px;top:452.5px;width:6px;height:6px;background:#8bbf3a;border-radius:1px"></div>
<div class="a" style="left:478.5px;top:452.5px;width:6px;height:6px;background:#5aa02c;border-radius:50%"></div>
<div class="a" style="left:491.7px;top:452.5px;width:6px;height:6px;background:#3f7fd8;border-radius:50%"></div>
<div class="a" style="left:506.3px;top:452.5px;width:6px;height:6px;background:#d8443a;border-radius:50%"></div>
<div class="a" style="left:520.8px;top:452.5px;width:6px;height:6px;background:#a83a2a;border-radius:1px"></div>
<div class="a" style="left:534.0px;top:452.5px;width:6px;height:6px;background:#c9a0a0;border-radius:1px"></div>
<div class="a" style="left:548.5px;top:452.5px;width:6px;height:6px;background:#d8352a;border-radius:1px"></div>
<div class="a" style="left:178px;top:460px;width:12px;height:1px;background:#7aaede"></div>
<div class="a" style="left:192px;top:460px;width:12px;height:1px;background:#7aaede"></div>
<div class="a" style="left:446px;top:460px;width:12px;height:1px;background:#7aaede"></div>
<div class="a" style="left:545px;top:460px;width:13px;height:1px;background:#7aaede"></div>
<div class="t" style="left:74.7px;top:450.7px;font-size:9px;color:#f4f4f4;text-shadow:0 0 1px #000;transform:scaleX(0.936);transform-origin:0 0">Ing. Juan Pablo Baires</div>
<svg class="a" style="left:698px;top:451px" width="85" height="10">
 <path d="M3 6.5 L5.5 4 L8 6.5" stroke="#d0d0d0" stroke-width="0.9" fill="none"/>
 <rect x="12.5" y="1.5" width="2.5" height="5" rx="1.2" fill="#e6e6e6"/><path d="M13.7 7 V9" stroke="#e6e6e6" stroke-width="0.8"/>
 <path d="M20 8.5 L23 3 L26 8.5 M21 6.5 H25" stroke="#bbb" stroke-width="0.8" fill="none"/>
 <path d="M29.5 4 H31 L33 2.5 V8 L31 6.5 H29.5 Z" fill="#ccc"/><path d="M34.5 3.5 Q35.7 5.2 34.5 7" stroke="#ccc" stroke-width="0.7" fill="none"/>
 <rect x="67.5" y="1" width="7" height="7.5" fill="#e0e0e0"/><rect x="68.5" y="2" width="5" height="4" fill="#8a8a8a"/>
</svg>
<div class="t" style="left:737px;top:452.5px;font-size:5.5px;color:#c8c8c8">ESP</div>
<div class="t" style="left:750px;top:452.5px;font-size:5.5px;color:#c8c8c8">05:12</div>
<!-- MINI PREVIEW -->
<div class="a" style="left:671px;top:382px;width:107px;height:61px;background:#000;box-shadow:0 0 2px rgba(0,0,0,0.4)"></div>
<div class="a" style="left:679px;top:386.5px;width:6px;height:6px;border-radius:50%;background:#e0434f;border:1px solid #fff"></div>
<div class="t" style="left:688px;top:387px;font-size:5.2px;color:#e8e8e8">SIG 11 05 2020</div>
<div class="t" style="left:729px;top:387px;font-size:5px;color:#ccc">16:11</div>
<div class="a" style="left:767px;top:390px;width:5px;height:1px;background:#bbb"></div>
<div class="a" style="left:697px;top:426px;width:41px;height:14px;background:#444"></div>
<div class="a" style="left:738px;top:426px;width:14px;height:14px;background:#b23a50"></div>
<svg class="a" style="left:697px;top:426px" width="55" height="14">
 <rect x="4" y="5" width="5" height="4" fill="#888"/><path d="M9 6.5 L11 5.5 V8.5 L9 7.5 Z" fill="#888"/>
 <rect x="19.5" y="3.5" width="2" height="5" rx="1" fill="#ddd"/><path d="M18.5 7 Q20.5 10 22.5 7 M20.5 9 V11" stroke="#ddd" stroke-width="0.6" fill="none"/>
 <rect x="31" y="4" width="7" height="5.5" stroke="#ccc" stroke-width="0.7" fill="none"/>
 <path d="M44.5 7.5 Q48 5 51.5 7.5 L50.5 8.3 L49.5 7.5 Q48 7 46.5 7.5 L45.5 8.3 Z" fill="#fff"/>
</svg>
<div id="chat" class="a"></div>
<!-- CHAT PANEL -->
<div class="t" style="left:799.7px;top:66.6px;font-size:13.3px;color:#ffffff;font-weight:bold;">Chat de la reunión</div>
<svg class="a" style="left:991px;top:67px" width="12" height="12"><path d="M1.5 1.5 L10.5 10.5 M10.5 1.5 L1.5 10.5" stroke="#c8c8c8" stroke-width="1.1"/></svg>
<div class="a" style="left:784px;top:96px;width:239px;height:384px;overflow:hidden">
 <div class="a" style="left:-784px;top:-96px;width:1023px;height:575px">
  <div class="a" style="left:819px;top:88px;width:173px;height:39.5px;background:#2d2c2c;border-radius:3px"></div>
  <div class="a" style="left:802px;top:96px;width:24px;height:24px;border-radius:50%;overflow:hidden;background:#f4f4f4">
  <div class="a" style="left:6px;top:0;width:14px;height:24px;background:#5a6a8a"></div>
  <div class="a" style="left:8px;top:2px;width:9px;height:10px;border-radius:45%;background:#b08070"></div>
  <div class="a" style="left:5px;top:11px;width:15px;height:14px;border-radius:30% 30% 0 0;background:#e42a22"></div>
</div>
<div class="a" style="left:817.5px;top:111.5px;width:9px;height:9px;border-radius:50%;background:#d74654;border:1px solid #2d2c2c"></div>
  <div class="t" style="left:832px;top:96.0px;font-size:9.5px;color:#b0b0b0;transform:scaleX(0.928);transform-origin:0 0">Roberto Alexande...</div>
  <div class="t" style="left:917px;top:96.0px;font-size:9.5px;color:#8c8c8c;transform:scaleX(0.91);transform-origin:0 0">5:59 p.m.</div>
  <svg class="a" style="left:957.5px;top:94.0px" width="13.0" height="13.0"><circle cx="6.5" cy="6.5" r="5.5" fill="#f5c33b"/><path d="M3.0 5.5 Q6.5 12.5 10.0 5.5 Z" fill="#fff" stroke="#8a5a10" stroke-width="0.7"/><path d="M3.0 3.5 Q4.0 2.0 5.0 3.5 M8.0 3.5 Q9.0 2.0 10.0 3.5" stroke="#6a4a10" stroke-width="0.8" fill="none"/></svg>
  <div class="t" style="left:972px;top:96.2px;font-size:9px;color:#c8c8c8;">1</div>
  <div class="t" style="left:832px;top:109.5px;font-size:10.4px;color:#ececec;">Cuando andaba bolo</div>
  <svg class="a" style="left:932.0px;top:107.0px" width="15.0" height="15.0"><circle cx="7.5" cy="7.5" r="6.5" fill="#f7c73e"/><circle cx="5.0" cy="6.0" r="0.9" fill="#6a4a10"/><circle cx="10.0" cy="6.0" r="0.9" fill="#6a4a10"/><path d="M4.5 9.5 Q7.5 12.0 10.5 9.5" stroke="#6a4a10" stroke-width="0.8" fill="none"/></svg>

  <div class="a" style="left:834px;top:140.3px;width:176px;height:53.3px;background:#3b3a39;border-radius:3px"></div>
  <div class="t" style="left:842.7px;top:152.6px;font-size:9.75px;color:#f0f0f0;font-weight:bold;">Reunión</div>
  <div class="t" style="left:842.7px;top:167.1px;font-size:8.8px;color:#d0d0d0;">Se inició la grabación</div>

  <div class="a" style="left:819px;top:199.5px;width:172px;height:99px;background:#2d2c2c;border-radius:3px"></div>
  <div class="a" style="left:802px;top:206px;width:24px;height:24px;border-radius:50%;overflow:hidden;background:radial-gradient(circle at 40% 30%,#c8d85a,#7a9a3a 80%)">
  <div class="a" style="left:9px;top:4px;width:7px;height:8px;border-radius:45%;background:#5a3a2a"></div>
  <div class="a" style="left:4px;top:12px;width:17px;height:14px;border-radius:40% 40% 0 0;background:#dcdcdc"></div>
</div>
<div class="a" style="left:817.5px;top:221.5px;width:9px;height:9px;border-radius:50%;background:#d74654;border:1px solid #2d2c2c"></div>
  <div class="t" style="left:832.3px;top:206.8px;font-size:9.5px;color:#b0b0b0;transform:scaleX(0.883);transform-origin:0 0">Josue Raul Calero...</div>
  <div class="t" style="left:916.6px;top:206.8px;font-size:9.5px;color:#8c8c8c;transform:scaleX(0.91);transform-origin:0 0">6:05 p.m.</div>
  <svg class="a" style="left:957.5px;top:204.5px" width="13.0" height="13.0"><circle cx="6.5" cy="6.5" r="5.5" fill="#f5c33b"/><path d="M3.0 5.5 Q6.5 12.5 10.0 5.5 Z" fill="#fff" stroke="#8a5a10" stroke-width="0.7"/><path d="M3.0 3.5 Q4.0 2.0 5.0 3.5 M8.0 3.5 Q9.0 2.0 10.0 3.5" stroke="#6a4a10" stroke-width="0.8" fill="none"/></svg>
  <div class="t" style="left:972px;top:207.0px;font-size:9px;color:#c8c8c8;">2</div>
  <div class="a" style="left:834px;top:218.7px;width:146px;height:74.3px;background:#000"></div>
  <div class="a" style="left:836px;top:220px;width:142px;height:3.5px;background:#1a1a1a"></div>
  <div class="a" style="left:874px;top:220.5px;width:72px;height:2.5px;background:#2e2e2e"></div>
  <div class="a" style="left:895px;top:254.5px;width:40px;height:1px;background:#444"></div>
  <div class="a" style="left:873px;top:259.5px;width:93px;height:1.2px;background:#8a8a8a"></div>
  <div class="a" style="left:895px;top:268px;width:23px;height:2.5px;background:#5b5fa7"></div>
  <div class="a" style="left:921px;top:268px;width:19px;height:2.5px;background:#262626"></div>

  <div class="a" style="left:819px;top:308px;width:173px;height:54.3px;background:#2d2c2c;border-radius:3px"></div>
  <div class="a" style="left:802px;top:315px;width:24px;height:24px;border-radius:50%;overflow:hidden;background:#f4f4f4">
  <div class="a" style="left:6px;top:0;width:14px;height:24px;background:#5a6a8a"></div>
  <div class="a" style="left:8px;top:2px;width:9px;height:10px;border-radius:45%;background:#b08070"></div>
  <div class="a" style="left:5px;top:11px;width:15px;height:14px;border-radius:30% 30% 0 0;background:#e42a22"></div>
</div>
<div class="a" style="left:817.5px;top:330.5px;width:9px;height:9px;border-radius:50%;background:#d74654;border:1px solid #2d2c2c"></div>
  <div class="t" style="left:832px;top:316.5px;font-size:9.5px;color:#b0b0b0;transform:scaleX(0.931);transform-origin:0 0">Roberto Alex...</div>
  <div class="t" style="left:900px;top:316.5px;font-size:9.5px;color:#8c8c8c;transform:scaleX(0.91);transform-origin:0 0">6:09 p.m.</div>
  <svg class="a" style="left:941px;top:314.5px" width="12" height="12"><path d="M1 5.5 H3 V11 H1 Z" fill="#e8a93a"/><path d="M3.5 5.5 L6 1 Q7.5 0.8 7.5 2.5 L7 4.5 H10.5 Q11.5 5 11 6.5 L10 10.5 Q9.5 11 8.5 11 H3.5 Z" fill="#f6c33f"/></svg>
  <div class="t" style="left:954.5px;top:316.7px;font-size:9px;color:#c8c8c8;">1</div>
  <div class="a" style="left:966px;top:313.5px;width:15px;height:14px;border-radius:2px;background:#3b3a39"></div>
  <div class="t" style="left:968px;top:317.1px;font-size:8px;color:#bdbdbd;">+ 1</div>
  <div class="t" style="left:832px;top:330.3px;font-size:9.8px;color:#ececec;">Chavez Perez, Cortez Solis y</div>
  <div class="t" style="left:832px;top:345.1px;font-size:9.8px;color:#ececec;">Bermudez Zometa</div>

  <div class="a" style="left:819px;top:372.4px;width:173px;height:39.1px;background:#2d2c2c;border-radius:3px"></div>
  <div class="a" style="left:802px;top:378.5px;width:24px;height:24px;border-radius:50%;overflow:hidden;background:#f4f4f4">
  <div class="a" style="left:6px;top:0;width:14px;height:24px;background:#5a6a8a"></div>
  <div class="a" style="left:8px;top:2px;width:9px;height:10px;border-radius:45%;background:#b08070"></div>
  <div class="a" style="left:5px;top:11px;width:15px;height:14px;border-radius:30% 30% 0 0;background:#e42a22"></div>
</div>
<div class="a" style="left:817.5px;top:394.0px;width:9px;height:9px;border-radius:50%;background:#d74654;border:1px solid #2d2c2c"></div>
  <div class="t" style="left:832px;top:380.4px;font-size:9.5px;color:#b0b0b0;transform:scaleX(0.928);transform-origin:0 0">Roberto Alexande...</div>
  <div class="t" style="left:916.5px;top:380.4px;font-size:9.5px;color:#8c8c8c;transform:scaleX(0.91);transform-origin:0 0">6:10 p.m.</div>
  <svg class="a" style="left:957px;top:378.5px" width="12" height="12"><path d="M1 5.5 H3 V11 H1 Z" fill="#e8a93a"/><path d="M3.5 5.5 L6 1 Q7.5 0.8 7.5 2.5 L7 4.5 H10.5 Q11.5 5 11 6.5 L10 10.5 Q9.5 11 8.5 11 H3.5 Z" fill="#f6c33f"/></svg>
  <div class="t" style="left:972px;top:380.6px;font-size:9px;color:#c8c8c8;">1</div>
  <div class="t" style="left:832px;top:393.6px;font-size:9.9px;color:#ececec;">Excelente Rene</div>
  <svg class="a" style="left:905.5px;top:390.9px" width="15.0" height="15.0"><circle cx="7.5" cy="7.5" r="6.5" fill="#f7c73e"/><circle cx="5.0" cy="6.0" r="0.9" fill="#6a4a10"/><circle cx="10.0" cy="6.0" r="0.9" fill="#6a4a10"/><path d="M4.5 9.5 Q7.5 12.0 10.5 9.5" stroke="#6a4a10" stroke-width="0.8" fill="none"/></svg>

  <div class="a" style="left:819px;top:421.2px;width:173px;height:53.7px;background:#2d2c2c;border-radius:3px"></div>
  <div class="a" style="left:802px;top:427.7px;width:24px;height:24px;border-radius:50%;overflow:hidden;background:radial-gradient(circle at 40% 30%,#c8d85a,#7a9a3a 80%)">
  <div class="a" style="left:9px;top:4px;width:7px;height:8px;border-radius:45%;background:#5a3a2a"></div>
  <div class="a" style="left:4px;top:12px;width:17px;height:14px;border-radius:40% 40% 0 0;background:#dcdcdc"></div>
</div>
<div class="a" style="left:817.5px;top:443.2px;width:9px;height:9px;border-radius:50%;background:#d74654;border:1px solid #2d2c2c"></div>
  <div class="t" style="left:832px;top:428.9px;font-size:9.5px;color:#b0b0b0;transform:scaleX(0.884);transform-origin:0 0">Josue Raul Calero Perez</div>
  <div class="t" style="left:933px;top:428.9px;font-size:9.5px;color:#8c8c8c;transform:scaleX(0.91);transform-origin:0 0">6:11 p.m.</div>
  <div class="t" style="left:832px;top:442.7px;font-size:10px;color:#ececec;transform:scaleX(0.915);transform-origin:0 0;">EXCELENTE APORTE EDGARDO!</div>
  <svg class="a" style="left:832px;top:454px" width="13" height="15"><ellipse cx="5.5" cy="5" rx="3.3" ry="3.8" fill="#e8302e"/><circle cx="4.3" cy="3.8" r="0.9" fill="#ff9a9a"/><path d="M5.5 8.8 Q5 11 7.5 11.5 Q10 12 10.5 13.5" stroke="#1a1a1a" stroke-width="0.9" fill="none"/></svg>
 </div>
</div>
<div class="a" style="left:802px;top:489.3px;width:204px;height:30.5px;background:#2d2c2c;border-radius:3px"></div>
<div class="t" style="left:814px;top:500.7px;font-size:10.1px;color:#a8a8a8;">Responder</div>
<svg class="a" style="left:800px;top:524px" width="210" height="17">
 <path d="M3 13.5 L7 3 L11 13.5 M4.5 10 H9.5" stroke="#b8b8b8" stroke-width="1" fill="none"/><path d="M9 14 L15 8 L16 9 L10 15 Z" stroke="#b8b8b8" stroke-width="0.8" fill="none"/><path d="M3 15.5 H12" stroke="#b8b8b8" stroke-width="0.8"/>
 <path d="M36.5 5 L30 11.5 Q28.5 13.5 30.5 15 Q32 16 33.5 14.5 L39.5 8 Q40.5 6.5 39 5.5 Q38 4.5 36.5 5.5 L31 11.5" stroke="#b8b8b8" stroke-width="1" fill="none"/>
 <circle cx="57" cy="8.5" r="6" stroke="#b8b8b8" stroke-width="1" fill="none"/><circle cx="55" cy="7" r="0.8" fill="#b8b8b8"/><circle cx="59" cy="7" r="0.8" fill="#b8b8b8"/><path d="M54 10 Q57 13 60 10" stroke="#b8b8b8" stroke-width="0.9" fill="none"/>
 <rect x="75.5" y="2.5" width="12" height="12" rx="2.5" stroke="#b8b8b8" stroke-width="1" fill="none"/><text x="77.3" y="11" font-size="5" font-family="Liberation Sans" font-weight="bold" fill="#b8b8b8">GIF</text>
 <path d="M99.5 2.5 H111 V10 L106.5 14.5 H99.5 Z" stroke="#b8b8b8" stroke-width="1" fill="none"/><path d="M102.5 7 H103.5 M107 7 H108 M102.5 9.5 Q105 12 108 9.5" stroke="#b8b8b8" stroke-width="0.9" fill="none"/>
 <path d="M123 3 L136.5 8.5 L123 14 L125 8.5 Z M125 8.5 H131" stroke="#8e8e8e" stroke-width="1" fill="none" stroke-linejoin="round"/>
 <circle cx="148" cy="8.5" r="1.3" fill="#c0c0c0"/><circle cx="153" cy="8.5" r="1.3" fill="#c0c0c0"/><circle cx="158" cy="8.5" r="1.3" fill="#c0c0c0"/>
 <path d="M192 2.5 L206 8.5 L192 14.5 L194.5 8.5 Z M194.5 8.5 H200" stroke="#c8c8c8" stroke-width="1" fill="none" stroke-linejoin="round"/>
</svg>

<div id="strip" class="a">
  <div class="a" style="left:30.8px;top:19.4px;width:33.2px;height:33.2px;border-radius:50%;background:#6264a7"></div>
  <div class="t" style="left:30.8px;width:33.2px;text-align:center;top:31px;font-size:11.5px;font-weight:bold;color:#fff">+8</div>
  <div class="a" style="left:93.7px;top:18.8px;width:32px;height:32px;border-radius:50%;overflow:hidden;background:radial-gradient(circle at 30% 30%,#c8d84a,#8aa83a 70%)">
    <div class="a" style="left:12px;top:6px;width:8px;height:9px;border-radius:50%;background:#4a3428"></div>
    <div class="a" style="left:7px;top:15px;width:18px;height:20px;border-radius:40% 40% 0 0;background:#e8e8e8"></div>
  </div>
  <div class="a" style="left:156.6px;top:18.8px;width:32px;height:32px;border-radius:50%;overflow:hidden;background:linear-gradient(100deg,#9a9690 0%,#7c7870 40%,#2a2a2a 60%,#1e1e1e 100%)">
    <div class="a" style="left:13px;top:6px;width:10px;height:12px;border-radius:50%;background:#6a4a3a"></div>
    <div class="a" style="left:9px;top:19px;width:19px;height:16px;border-radius:40% 40% 0 0;background:#1e3a6a"></div>
  </div>
  <div class="a" style="left:219px;top:18.8px;width:32px;height:32px;border-radius:50%;overflow:hidden;background:linear-gradient(180deg,#e8ecf0 0%,#8fb0d8 35%,#a8c47a 55%,#d8d8d0 100%)">
    <div class="a" style="left:11px;top:5px;width:10px;height:11px;border-radius:50%;background:#5a4036"></div>
    <div class="a" style="left:10px;top:3px;width:12px;height:5px;border-radius:40%;background:#223"></div>
    <div class="a" style="left:5px;top:16px;width:22px;height:18px;border-radius:40% 40% 0 0;background:#45484e"></div>
  </div>
  <div class="a" style="left:282px;top:18.8px;width:32px;height:32px;border-radius:50%;overflow:hidden;background:linear-gradient(180deg,#d8d0c8 0%,#b8aca0 50%,#8a8278 100%)">
    <div class="a" style="left:13px;top:5px;width:6px;height:7px;border-radius:50%;background:#6a4a3a"></div>
    <div class="a" style="left:11px;top:11px;width:10px;height:9px;background:#8ab8e0"></div>
    <div class="a" style="left:10px;top:19px;width:12px;height:10px;background:#1e2a3a"></div>
  </div>
  <div class="a" style="left:329px;top:0;width:136px;height:70px;background:#3c3c3c"></div>
  <div class="a" style="left:380.6px;top:19px;width:32.8px;height:32.8px;border-radius:50%;overflow:hidden;background:radial-gradient(circle at 50% 45%,#4a4a6a,#2e3050 70%)">
    <div class="a" style="left:12px;top:3px;width:9px;height:11px;border-radius:50%;background:#c49a7a"></div>
    <div class="a" style="left:7px;top:14px;width:19px;height:20px;border-radius:40% 40% 0 0;background:#262a48"></div>
    <div class="a" style="left:15px;top:14px;width:3px;height:18px;background:#9aa0b0"></div>
  </div>
  <div class="t" style="left:341.2px;top:60px;font-size:9px;color:#ececec;transform:scaleX(0.955);transform-origin:0 0">Jose Edgardo Hernan...</div>
  <div class="a" style="left:465px;top:0;width:134px;height:70px;background:#000"></div>
  <div class="t" style="left:476px;top:60px;font-size:9px;color:#ececec;transform:scaleX(0.955);transform-origin:0 0">Rene Alexander Pere...</div>
  <div class="a" style="left:599px;top:0;width:134px;height:70px;background:radial-gradient(ellipse at 50% 45%,#4a4a68 0%,#3e3e56 60%,#38384a 100%)"></div>
  <div class="a" style="left:647.5px;top:15px;width:39px;height:39px;border-radius:50%;background:#7b7fd8"></div>
  <div class="a" style="left:650px;top:17.5px;width:34px;height:34px;border-radius:50%;background:#2b2b3a"></div>
  <div class="a" style="left:651.5px;top:19px;width:31px;height:31px;border-radius:50%;overflow:hidden;background:radial-gradient(circle at 50% 40%,#f0f0f0,#c8c8c8 70%)">
    <div class="a" style="left:9px;top:4px;width:13px;height:15px;border-radius:45%;background:#5a3a2a"></div>
    <div class="a" style="left:3px;top:19px;width:25px;height:14px;border-radius:45% 45% 0 0;background:#3a6ab0"></div>
  </div>
  <div class="t" style="left:610.6px;top:60px;font-size:9px;color:#ececec;transform:scaleX(0.938);transform-origin:0 0">Ing. Juan Pablo Baires</div>
</div>
<svg class="a" style="left:486px;top:531px" width="13" height="13"><rect x="4.5" y="1" width="4" height="7" rx="2" fill="none" stroke="#ddd" stroke-width="0.9"/><path d="M2.5 6 Q2.5 9.5 6.5 9.5 Q10.5 9.5 10.5 6 M6.5 9.5 V12" stroke="#ddd" stroke-width="0.9" fill="none"/><path d="M1.5 12 L11.5 1" stroke="#ddd" stroke-width="1"/></svg>
<svg class="a" style="left:621px;top:531px" width="13" height="13"><rect x="4.5" y="1" width="4" height="7" rx="2" fill="none" stroke="#ddd" stroke-width="0.9"/><path d="M2.5 6 Q2.5 9.5 6.5 9.5 Q10.5 9.5 10.5 6 M6.5 9.5 V12" stroke="#ddd" stroke-width="0.9" fill="none"/><path d="M1.5 12 L11.5 1" stroke="#ddd" stroke-width="1"/></svg>

<div id="tb" class="a">
  <svg class="a" style="left:12px;top:10px" width="13" height="13"><path d="M0 1.8 L5.6 1 V6 H0 Z M6.4 0.9 L12.5 0 V6 H6.4 Z M0 6.8 H5.6 V11.8 L0 11 Z M6.4 6.8 H12.5 V12.6 L6.4 11.8 Z" fill="#f4f4f4"/></svg>
  <svg class="a" style="left:47px;top:9px" width="15" height="15"><circle cx="9" cy="6" r="4.6" stroke="#e8e8e8" stroke-width="1.2" fill="none"/><path d="M5.8 9.2 L1.5 13.5" stroke="#e8e8e8" stroke-width="1.4"/></svg>
  <svg class="a" style="left:83px;top:9px" width="15" height="15"><rect x="2.5" y="3.5" width="9" height="7" stroke="#e8e8e8" stroke-width="1.1" fill="none"/><path d="M1 1.5 H13 M1 12.5 H13" stroke="#e8e8e8" stroke-width="1.1"/><path d="M13.5 4 V10" stroke="#e8e8e8" stroke-width="1.1"/></svg>
  <svg class="a" style="left:119px;top:8px" width="18" height="16"><path d="M1 3 H6.5 L8 4.5 H16 V14 H1 Z" fill="#f3c54a"/><path d="M1 6 H16 V14 H1 Z" fill="#f8d775"/><rect x="6" y="9" width="5" height="5" fill="#3a9ee0"/></svg>
  <svg class="a" style="left:156px;top:8px" width="17" height="17"><circle cx="8.5" cy="8.5" r="7.5" fill="#e8463a"/><circle cx="8.5" cy="9" r="4.5" fill="#5b3fb8"/><path d="M3 5 Q6 1 11 1.5 Q15 3 16 8 Q14 3.5 10 4 Q13 6 11 8 Q8 4.5 3 5 Z" fill="#ffb23a"/></svg>
  <svg class="a" style="left:192px;top:8px" width="18" height="17"><rect x="6" y="1" width="11" height="15" fill="#1e7ad6"/><rect x="9" y="3" width="8" height="11" fill="#58a8ef"/><rect x="1" y="4" width="10" height="10" fill="#0a5fb4"/><circle cx="6" cy="9" r="2.7" stroke="#fff" stroke-width="1.3" fill="none"/></svg>
  <svg class="a" style="left:229px;top:8px" width="18" height="17"><circle cx="9" cy="8.5" r="8" fill="#2a88d0"/><circle cx="9" cy="8.5" r="6.6" fill="none" stroke="#fff" stroke-width="1"/><path d="M4.5 5.5 L7 13 L9 7.5 L11 13 L13.5 5.5" stroke="#fff" stroke-width="1.3" fill="none"/></svg>
  <svg class="a" style="left:266px;top:8px" width="18" height="17"><circle cx="9" cy="8.5" r="8" fill="#db4437"/><path d="M9 8.5 L16.2 5 A8 8 0 0 1 8 16.5 Z" fill="#f4c20d"/><path d="M9 8.5 L8 16.5 A8 8 0 0 1 1.5 4.5 Z" fill="#0f9d58"/><circle cx="9" cy="8.5" r="3.8" fill="#fff"/><circle cx="9" cy="8.5" r="3" fill="#4285f4"/></svg>
  <svg class="a" style="left:302px;top:7px" width="19" height="19"><circle cx="13" cy="4" r="2.5" fill="#7b83eb"/><rect x="9" y="6" width="8" height="8" rx="2" fill="#7b83eb"/><rect x="1" y="4" width="10" height="10" fill="#4b53bc"/><path d="M3 6.5 H9 M6 6.5 V12" stroke="#fff" stroke-width="1.3"/><circle cx="14.5" cy="14.5" r="3.3" fill="#e02b3a" stroke="#0f131b" stroke-width="0.8"/></svg>
  <div class="a" style="left:223px;top:30px;width:30px;height:1px;background:#7ab6ea"></div>
  <div class="a" style="left:260px;top:30px;width:30px;height:1px;background:#7ab6ea"></div>
  <div class="a" style="left:296px;top:30px;width:30px;height:1px;background:#7ab6ea"></div>
  <svg class="a" style="left:857px;top:11px" width="12" height="8"><path d="M1 6.5 L6 1.5 L11 6.5" stroke="#e8e8e8" stroke-width="1.1" fill="none"/></svg>
  <svg class="a" style="left:874px;top:9px" width="15" height="14"><rect x="1" y="1" width="3" height="3" stroke="#e0e0e0" stroke-width="0.9" fill="none"/><rect x="3" y="3" width="10" height="7" stroke="#e0e0e0" stroke-width="1" fill="none"/><path d="M8 10 V12.5 M5 12.5 H11" stroke="#e0e0e0" stroke-width="1"/></svg>
  <svg class="a" style="left:892px;top:9px" width="14" height="13"><path d="M1.5 4.5 H3.5 L7 1.5 V11.5 L3.5 8.5 H1.5 Z" stroke="#e0e0e0" stroke-width="1" fill="none"/><path d="M9 4 Q10.3 6.5 9 9 M11 2.5 Q13 6.5 11 10.5" stroke="#e0e0e0" stroke-width="0.9" fill="none"/></svg>
  <div class="t" style="left:914px;top:11.5px;font-size:8.1px;color:#e8e8e8;transform:scaleX(0.9);transform-origin:0 0">ESP</div>
  <div class="t" style="left:949px;top:4.8px;font-size:8.6px;color:#e8e8e8;transform:scaleX(0.92);transform-origin:0 0">18:12</div>
  <div class="t" style="left:940px;top:18.5px;font-size:8.6px;color:#e8e8e8;transform:scaleX(1.03);transform-origin:0 0">11/5/2020</div>
  <svg class="a" style="left:991px;top:9px" width="16" height="15"><path d="M1.5 1.5 H14.5 V10.5 H9.5 L7.5 13 L5.5 10.5 H1.5 Z" stroke="#e8e8e8" stroke-width="1.1" fill="none" stroke-linejoin="round"/></svg>
  <div class="a" style="left:1018px;top:4px;width:1px;height:24px;background:#505560"></div>
</div>
</body></html>
